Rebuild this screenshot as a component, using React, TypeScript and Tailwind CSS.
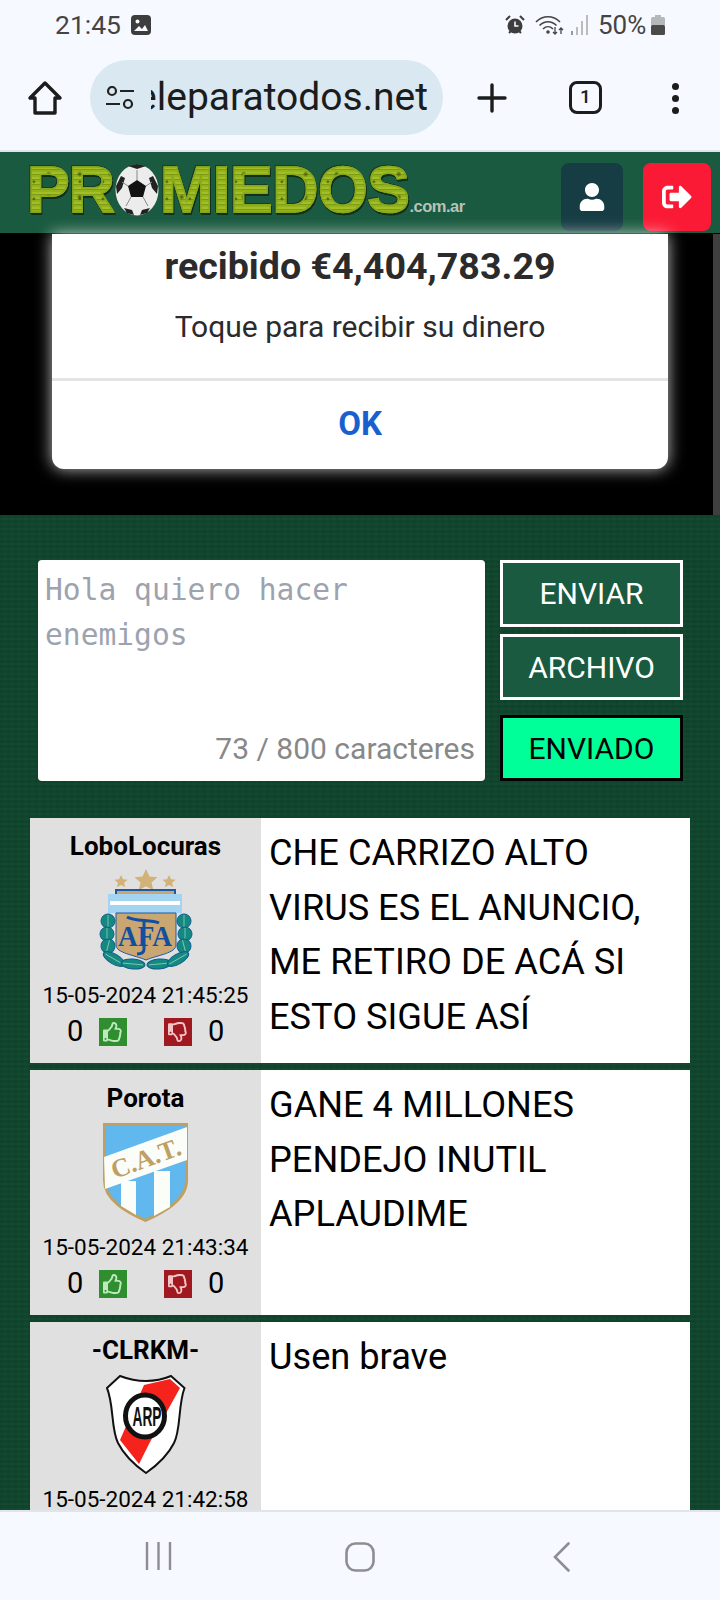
import React from 'react';
import { FaUser, FaSignOutAlt, FaRegThumbsUp, FaRegThumbsDown } from 'react-icons/fa';

const roboto = { fontFamily: 'Roboto, sans-serif' };

const StatusBar = () => (
  <div className="flex h-[50px] items-center pl-[55px] pr-[55px] text-[26px] text-[#444]">
    <span className="text-[26.500px]">21:45</span>
    <svg className="ml-[10px]" width="20" height="20" viewBox="0 0 20 20">
      <rect x="0" y="0" width="20" height="20" rx="4" fill="#3d3d3d" />
      <circle cx="6.5" cy="6.5" r="2" fill="#f6f9ff" />
      <path d="M3 16l5-5 3 3 3-4 3 6z" fill="#f6f9ff" />
    </svg>
    <div className="ml-auto flex items-center">
      {/* alarm */}
      <svg width="20" height="20" viewBox="0 0 20 20">
        <circle cx="10" cy="11" r="7.5" fill="#3d3d3d" />
        <path d="M10 6.5V11h3.5" stroke="#f6f9ff" strokeWidth="1.6" fill="none" />
        <path d="M1 5l4-4M19 5l-4-4M4 18l2-2M16 18l-2-2" stroke="#3d3d3d" strokeWidth="2" />
      </svg>
      {/* wifi */}
      <svg className="ml-[10px]" width="29" height="20" viewBox="0 0 29 20" fill="none" stroke="#444" strokeWidth="1.6">
        <path d="M1 7c7-7 17-7 24 0" />
        <path d="M4.5 10.5c5-5 12-5 17 0" />
        <path d="M8 14c3-3 7-3 10 0" />
        <circle cx="13" cy="17" r="1" fill="#444" />
        <path d="M20 12v7M18 17l2 2 2-2M26 19v-6M24 15l2-2 2 2" strokeWidth="1.3" />
      </svg>
      {/* signal */}
      <svg className="ml-[7px]" width="17" height="20" viewBox="0 0 17 20">
        <rect x="0" y="16" width="2" height="4" fill="#999" />
        <rect x="5" y="12" width="2" height="8" fill="#bbb" />
        <rect x="10" y="6" width="2" height="14" fill="#bbb" />
        <rect x="15" y="0" width="2" height="20" fill="#bbb" />
      </svg>
      <span className="ml-[10px] w-[48px] whitespace-nowrap">50%</span>
      {/* battery */}
      <svg className="ml-[5px]" width="14" height="20" viewBox="0 0 14 20">
        <rect x="4" y="0" width="6" height="2" fill="#b5b8bb" />
        <rect x="0" y="2" width="14" height="9" rx="1.5" fill="#b5b8bb" />
        <rect x="0" y="10" width="14" height="10" rx="1.5" fill="#4a4a4a" />
      </svg>
    </div>
  </div>
);

const BrowserBar = () => (
  <div className="flex h-[100px] items-start pt-[10px]">
    <svg className="ml-[27px] mt-[20px]" width="36" height="36" viewBox="0 0 36 36" fill="none" stroke="#1c1c1c" strokeWidth="3.4" strokeLinejoin="round">
      <path d="M18 3L3 18h5v15h20V18h5z" />
    </svg>
    <div className="ml-[27px] flex h-[75px] w-[353px] items-center rounded-full bg-[#dae8f1] pl-[16px] pr-[15px]">
      <svg width="28" height="24" viewBox="0 0 28 24" fill="none" stroke="#222" strokeWidth="2.2" className="shrink-0">
        <circle cx="6" cy="5" r="4" />
        <path d="M14 5h14M0 18h14" />
        <circle cx="22" cy="18" r="4" />
      </svg>
      <div className="ml-[17px] flex h-[50px] flex-1 items-center justify-end overflow-hidden whitespace-nowrap text-[39px] text-[#1c1c1c]">
        teleparatodos.net
      </div>
    </div>
    <svg className="ml-[34px] mt-[23px]" width="30" height="30" viewBox="0 0 30 30" stroke="#1c1c1c" strokeWidth="3.4" strokeLinecap="round">
      <path d="M15 2v26M2 15h26" />
    </svg>
    <div className="ml-[62px] mt-[21px] flex h-[33px] w-[33px] items-center justify-center rounded-[8px] border-[3px] border-[#1c1c1c] text-[19px] font-medium text-[#1c1c1c]">
      1
    </div>
    <div className="ml-[70px] mt-[23px] flex flex-col gap-[5px]">
      <span className="h-[7px] w-[7px] rounded-full bg-[#1c1c1c]" />
      <span className="h-[7px] w-[7px] rounded-full bg-[#1c1c1c]" />
      <span className="h-[7px] w-[7px] rounded-full bg-[#1c1c1c]" />
    </div>
  </div>
);

const Ball = () => (
  <svg width="44" height="52" viewBox="0 0 44 52" className="mx-[1px] shrink-0">
    <ellipse cx="22" cy="26" rx="21.5" ry="25.5" fill="#ececec" />
    <path d="M22 16l9 6-3 11H16l-3-11z" fill="#111" />
    <path d="M13 2l9 3 9-3-9-2zM1 22l5-10 4 2-3 10-5 6zM43 22l-5-10-4 2 3 10 5 6zM9 44l8 2 2 5-7-2zM35 44l-8 2-2 5 7-2z" fill="#222" />
    <path d="M22 16V6M13 22L7 18M31 22l6-4M16 33l-5 9M28 33l5 9" stroke="#888" strokeWidth="1" />
  </svg>
);

const logoLetters =
  'bg-[radial-gradient(circle_at_30%_40%,#3a4a10_0px,transparent_2px),radial-gradient(circle_at_70%_70%,#46560f_0px,transparent_3px),repeating-linear-gradient(0deg,#93b31c_0px,#93b31c_2px,#7d9c14_2px,#7d9c14_3px,#a3bf28_3px,#a3bf28_5px)] bg-[length:23px_17px,31px_23px,auto] bg-clip-text text-transparent [-webkit-text-stroke:1.500px_#89a81a] [filter:drop-shadow(1px_2px_0_#10301c)_drop-shadow(-1px_-1px_0_#1b3d22)]';

const Logo = () => (
  <div className="ml-[27px] flex h-[54px] items-center" style={{ fontFamily: '"Liberation Sans", sans-serif' }}>
    <span className={`text-[64px] font-bold leading-none tracking-[-1px] ${logoLetters}`}>PR</span>
    <Ball />
    <span className={`text-[64px] font-bold leading-none tracking-[-0.500px] ${logoLetters}`}>MIEDOS</span>
    <span className="mt-[32px] text-[16.500px] font-bold tracking-[-0.5px] text-[#b9c2b9]">.com.ar</span>
  </div>
);

const SiteHeader = () => (
  <div className="flex h-[81px] items-start bg-[#1a5a40] pt-[11px]">
    <Logo />
    <div className="ml-auto mr-[9px] flex gap-[20px]">
      <div className="flex h-[68px] w-[62px] items-center justify-center rounded-[8px] bg-[#163c44]">
        <FaUser className="text-white" size={28} />
      </div>
      <div className="flex h-[68px] w-[68px] items-center justify-center rounded-[8px] bg-[#fb1a35]">
        <FaSignOutAlt className="text-white" size={30} />
      </div>
    </div>
  </div>
);

const AdBlock = () => (
  <div className="flex h-[281px] items-start justify-between bg-black pl-[52px]">
    <div className="h-[235px] w-[616px] rounded-b-[12px] bg-white shadow-[0_0_16px_rgba(255,255,255,0.75)]">
      <div className="flex h-[147px] flex-col items-center border-b-[3px] border-[#e4e4e4]">
        <div className="mt-[9px] text-[37.600px] font-bold leading-[46px] text-[#2b2b2b]">recibido €4,404,783.29</div>
        <div className="mt-[18px] text-[30px] leading-[40px] text-[#2b2b2b]">Toque para recibir su dinero</div>
      </div>
      <div className="flex h-[85px] items-center justify-center text-[33px] font-bold text-[#1a5fd0]">OK</div>
    </div>
    <div className="h-full w-[7px] bg-[#3f3f3f]" />
  </div>
);

const ComposeForm = () => (
  <div className="flex pl-[38px] pt-[45px]">
    <div className="flex h-[221px] w-[447px] flex-col rounded-[4px] bg-white pb-[14px] pl-[7px] pr-[10px] pt-[8px]">
      <div
        className="text-[29.600px] leading-[45px] text-[#9ca3af]"
        style={{ fontFamily: '"DejaVu Sans Mono", monospace' }}
      >
        Hola quiero hacer
        <br />
        enemigos
      </div>
      <div className="mt-auto text-right text-[30px] leading-[36px] text-[#888]">73 / 800 caracteres</div>
    </div>
    <div className="ml-[15px] flex w-[183px] flex-col">
      <button className="h-[67px] border-[3px] border-white bg-[#1a5a40] text-[30px] text-white">ENVIAR</button>
      <button className="mt-[7px] h-[66px] border-[3px] border-white bg-[#1a5a40] text-[30px] text-white">ARCHIVO</button>
      <button className="mt-[15px] h-[66px] border-[3px] border-black bg-[#00ff99] text-[30px] text-black">ENVIADO</button>
    </div>
  </div>
);

const laurel = [
  [9, 52, 0],
  [8, 65, 0],
  [9, 77, 15],
  [85, 52, 0],
  [86, 65, 0],
  [85, 77, -15],
  [15, 90, 30],
  [34, 95, 5],
  [60, 95, -5],
  [79, 90, -30],
];

const AfaCrest = () => (
  <svg width="94" height="103" viewBox="0 0 94 103">
    <g fill="#d3b27a">
      <path d="M47 0l3.500 7.500 8 .7-6 5.200 1.800 7.800-7.300-4-7.300 4 1.800-7.800-6-5.200 8-.7z" />
      <path d="M22 6l2 4.300 4.700.4-3.600 3 1.100 4.600-4.200-2.400-4.200 2.400 1.100-4.600-3.600-3 4.700-.4z" />
      <path d="M70 6l2 4.300 4.700.4-3.600 3 1.100 4.600-4.200-2.400-4.200 2.400 1.100-4.600-3.600-3 4.700-.4z" />
    </g>
    <path d="M16 20h61v6H16z" fill="#1d5aa3" />
    <path d="M18 22h57v3H18z" fill="#c9a672" />
    <path d="M9 25h74v19H9z" fill="#a3d4f2" />
    <path d="M11 32h70v4H11z" fill="#fff" />
    <path d="M17 44h60v32c0 8-18 10-30 15C35 86 17 84 17 76z" fill="#c9a672" stroke="#1d5aa3" strokeWidth="1" />
    {laurel.map(([cx, cy, r]) => (
      <g key={`${cx}-${cy}`} transform={`rotate(${r} ${cx} ${cy})`}>
        <ellipse cx={cx} cy={cy} rx={cy > 85 ? 12 : 7} ry={cy > 85 ? 5 : 7} fill="#15897f" stroke="#0d5e8f" strokeWidth="1" />
        <path d={cy > 85 ? `M${cx - 10} ${cy}h20` : `M${cx} ${cy - 6}v12`} stroke="#8fd0c4" strokeWidth="0.8" />
      </g>
    ))}
    <text x="46" y="77" textAnchor="middle" fontFamily='"Liberation Serif", serif' fontWeight="bold" fontSize="30" fill="#124f9e" textLength="54" lengthAdjust="spacingAndGlyphs">
      AFA
    </text>
    <path d="M28 48c8 5 24 2 32 6M45 52v28c0 4-3 5-7 5" stroke="#124f9e" strokeWidth="3" fill="none" />
  </svg>
);

const CatCrest = () => (
  <svg width="85" height="99" viewBox="0 0 85 99">
    <path d="M1.500 1.500h82v56c0 20-24 32-41 40C25 89.500 1.500 77.500 1.500 57.500z" fill="#60b8ee" stroke="#bf9f62" strokeWidth="3" />
    <path d="M18 58h15v34l-15-9zM51 48h16v36l-16 9z" fill="#fbfdf8" />
    <path d="M1 34L84 4v33L2 66z" fill="#fbfdf8" />
    <text
      x="43"
      y="44"
      textAnchor="middle"
      fontFamily='"Liberation Serif", serif'
      fontWeight="bold"
      fontSize="26"
      fill="#bf9f62"
      transform="rotate(-20 43 36)"
    >
      C.A.T.
    </text>
  </svg>
);

const CarpCrest = () => (
  <svg width="80" height="99" viewBox="0 0 80 99">
    <path d="M14 1Q27 6 40 6Q53 6 65 1L78.500 13C72 30 75 55 68 68C62 80 50 91 40 98C30 91 18 80 12 68C5 55 8 30 1 13Z" fill="#fff" stroke="#111" strokeWidth="2" />
    <path d="M38 10L64 4L74 13L44 67L33 89L14 65Z" fill="#f5231c" />
    <ellipse cx="39" cy="41" rx="19.500" ry="21" fill="#fff" stroke="#111" strokeWidth="5" />
    <text x="41" y="51" textAnchor="middle" fontFamily='"Liberation Sans", sans-serif' fontWeight="bold" fontSize="28" fill="#111" textLength="29" lengthAdjust="spacingAndGlyphs">
      ARP
    </text>
  </svg>
);

const Votes = () => (
  <div className="mt-[5px] flex h-[34px] w-[157px] items-center text-[29px] text-black">
    <span className="w-[16px]">0</span>
    <div className="ml-[16px] flex h-[28px] w-[28px] items-center justify-center bg-[#2f8f2f]">
      <FaRegThumbsUp className="text-[#bfe8bf]" size={20} />
    </div>
    <div className="ml-[37px] flex h-[28px] w-[28px] items-center justify-center bg-[#a01820]">
      <FaRegThumbsDown className="text-[#f2c6c6]" size={20} />
    </div>
    <span className="ml-[16px] w-[16px]">0</span>
  </div>
);

const Post = ({ name, date, crest, text }: { name: string; date: string; crest: React.ReactNode; text: React.ReactNode }) => (
  <div className="flex h-[245px] shrink-0 bg-white">
    <div className="flex w-[231px] flex-col items-center bg-[#e0e0e0] pt-[11px]">
      <div className="text-[26px] font-bold leading-[34px] text-black">{name}</div>
      <div className="flex h-[114px] items-center justify-center">{crest}</div>
      <div className="mt-[3px] whitespace-nowrap text-[22.500px] leading-[30px] text-black">{date}</div>
      <Votes />
    </div>
    <div className="flex-1 pl-[8px] pr-[10px] pt-[8px] text-[36.200px] leading-[54.500px] text-black">{text}</div>
  </div>
);

const NavBar = () => (
  <div className="flex h-[90px] shrink-0 items-start border-t-2 border-[#e0e5ea] bg-[#f6f9ff] pl-[145px] pt-[30px]">
    <svg width="27" height="28" viewBox="0 0 27 28" stroke="#8e8e92" strokeWidth="2.4">
      <path d="M2 0v28M13.500 0v28M25 0v28" />
    </svg>
    <svg className="ml-[173px]" width="30" height="30" viewBox="0 0 30 30" fill="none" stroke="#8e8e92" strokeWidth="2.6">
      <rect x="1.500" y="1.500" width="27" height="27" rx="9" />
    </svg>
    <svg className="ml-[178px]" width="18" height="30" viewBox="0 0 18 30" fill="none" stroke="#8e8e92" strokeWidth="2.6" strokeLinecap="round">
      <path d="M15.500 1.500L2 15l13.500 13.500" />
    </svg>
  </div>
);

export default function App() {
  return (
    <div className="flex h-[1600px] w-[720px] flex-col overflow-hidden bg-[#f6f9ff]" style={roboto}>
      <StatusBar />
      <BrowserBar />
      <div className="h-[2px] bg-[#dfe6e8]" />
      <SiteHeader />
      <div className="h-[1px] bg-black" />
      <AdBlock />
      <div className="min-h-0 flex-1 overflow-hidden bg-[#10452d] bg-[repeating-linear-gradient(90deg,rgba(0,0,0,0.04)_0px,rgba(0,0,0,0.04)_3px,transparent_3px,transparent_7px),repeating-linear-gradient(0deg,rgba(255,255,255,0.02)_0px,rgba(255,255,255,0.02)_2px,transparent_2px,transparent_5px)]">
        <ComposeForm />
        <div className="mt-[37px] flex flex-col gap-[7px] pl-[30px] pr-[30px]">
          <Post
            name="LoboLocuras"
            date="15-05-2024 21:45:25"
            crest={<AfaCrest />}
            text={<>CHE CARRIZO ALTO VIRUS ES EL ANUNCIO, ME RETIRO DE ACÁ SI ESTO SIGUE ASÍ</>}
          />
          <Post
            name="Porota"
            date="15-05-2024 21:43:34"
            crest={<CatCrest />}
            text={<>GANE 4 MILLONES PENDEJO INUTIL APLAUDIME</>}
          />
          <Post name="-CLRKM-" date="15-05-2024 21:42:58" crest={<CarpCrest />} text="Usen brave" />
        </div>
      </div>
      <NavBar />
    </div>
  );
}
